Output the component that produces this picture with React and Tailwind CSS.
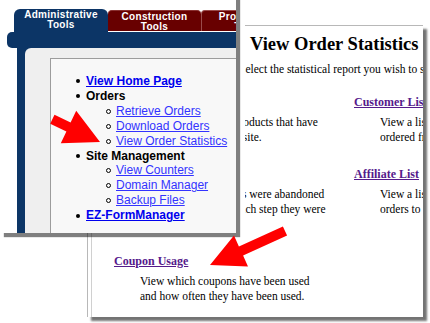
const MENU = [
  { text: 'View Home Page', level: 1, link: true },
  { text: 'Orders', level: 1 },
  { text: 'Retrieve Orders', level: 2, link: true },
  { text: 'Download Orders', level: 2, link: true },
  { text: 'View Order Statistics', level: 2, link: true },
  { text: 'Site Management', level: 1 },
  { text: 'View Counters', level: 2, link: true },
  { text: 'Domain Manager', level: 2, link: true },
  { text: 'Backup Files', level: 2, link: true },
  { text: 'EZ-FormManager', level: 1, link: true },
];

const REPORTS = [
  {
    title: 'Popular Products',
    lines: ['Display the popular products that have', 'been bought from our site.'],
  },
  {
    title: 'Customer List',
    lines: ['View a list of customers who have', 'ordered from your site.'],
  },
  {
    title: 'Abandoned Carts',
    lines: ['Shows you which carts were abandoned', 'and also exactly at which step they were', 'abandoned.'],
  },
  {
    title: 'Affiliate List',
    lines: ['View a list of affiliates and the', 'orders to them.'],
  },
  {
    title: 'Coupon Usage',
    lines: ['View which coupons have been used', 'and how often they have been used.'],
  },
];

function StatsWindow() {
  return (
    <div className="absolute left-[87px] top-[25px] w-[336px] h-[292px] bg-white border-t border-l border-[#b8b8b8] shadow-[4px_4px_2px_rgba(0,0,0,0.55)] overflow-hidden">
      <div className="h-full ml-[3px] border-l border-[#d0d0d0] text-black" style={{ fontFamily: '"Liberation Serif", "Times New Roman", serif' }}>
        <h1 className="pl-[158px] pt-[7px] text-[18.5px] leading-[22px] font-bold whitespace-nowrap">View Order Statistics</h1>
        <p className="pl-[147px] mt-[7px] text-[11.5px] leading-[15px] whitespace-nowrap">
          Select the statistical report you wish to see.
        </p>
        <div className="grid grid-cols-[240px_240px] gap-y-[22px] pl-[22px] mt-[18px]">
          {REPORTS.map((r) => (
            <div key={r.title}>
              <a className="block text-[12px] leading-[15px] font-bold text-[#551a8b] underline whitespace-nowrap">{r.title}</a>
              <div className="mt-[5px] pl-[26px] text-[11.5px] leading-[15px] whitespace-nowrap">
                {r.lines.map((l) => (
                  <div key={l}>{l}</div>
                ))}
              </div>
            </div>
          ))}
        </div>
      </div>
    </div>
  );
}

function AdminWindow() {
  return (
    <div
      className="absolute left-0 top-[-4px] w-[236px] h-[237px] bg-white shadow-[4px_4px_1px_rgba(0,0,0,0.5),9px_0_0_#ffffff] overflow-hidden flex flex-col"
      style={{ fontFamily: '"Liberation Sans", Arial, sans-serif' }}
    >
      {/* tabs */}
      <div className="flex items-start pl-[14px] pt-[13px] text-white text-[10px] leading-[10px] font-bold tracking-[0.3px] text-center">
        <div className="w-[94px] h-[23px] shrink-0 pt-[1px] bg-[#0c3566] rounded-t-[6px]">
          Administrative<br />Tools
        </div>
        <div className="w-[93px] h-[21px] shrink-0 mt-[1px] pt-[1px] bg-[#680000] rounded-t-[4px] border-t border-[#8a3030]">
          Construction<br />Tools
        </div>
        <div className="w-[93px] h-[21px] shrink-0 mt-[1px] pt-[1px] bg-[#680000] rounded-t-[4px] border-t border-l border-[#9a4a4a] whitespace-nowrap">
          Promotions<br />Tools
        </div>
      </div>

      {/* navy frame */}
      <div className="flex flex-1">
        <div className="w-[17px] shrink-0 pl-[7px]">
          <div className="h-[16px] bg-[#0c3566] rounded-l-[5px]" />
        </div>
        <div className="flex-1 bg-[#0c3566] pt-[16px] pl-[8px] flex">
          <div className="flex-1 bg-[#efefef] rounded-tl-[6px] pt-[10px] pl-[25px]">
            <div className="h-full bg-[#f8f8f8] border border-[#9c9c9c] border-r-0 border-b-0 pt-[15px] text-[12px] leading-[14.9px]">
              {MENU.map((m) => (
                <div
                  key={m.text}
                  className={m.level === 1 ? 'flex items-center pl-[25px]' : 'flex items-center pl-[55px]'}
                >
                  {m.level === 1 ? (
                    <span className="w-[4px] h-[4px] bg-black rounded-full mr-[6px] shrink-0" />
                  ) : (
                    <span className="w-[5px] h-[5px] border border-black rounded-full mr-[5px] shrink-0" />
                  )}
                  {m.link ? (
                    <a className={m.level === 1 ? 'font-bold text-[#0000ee] underline whitespace-nowrap' : 'text-[#3333ff] underline whitespace-nowrap'}>
                      {m.text}
                    </a>
                  ) : (
                    <span className="font-bold text-black whitespace-nowrap">{m.text}</span>
                  )}
                </div>
              ))}
            </div>
          </div>
        </div>
      </div>
    </div>
  );
}

function Arrows() {
  return (
    <svg className="absolute left-0 top-0 pointer-events-none" width="430" height="323" viewBox="0 0 430 323">
      <polygon
        fill="#ff0000"
        points="54.5,114.8 70.6,122.5 76.2,110.8 100,142 60.8,143.2 66.4,131.5 50.2,123.8"
      />
      <polygon
        fill="#ff0000"
        points="282.9,226.4 238.9,246.4 234,235.5 210,265 248,266.5 243.1,255.6 287.1,235.6"
      />
    </svg>
  );
}

export default function App() {
  return (
    <div className="relative w-[430px] h-[323px] overflow-hidden bg-white">
      <StatsWindow />
      <AdminWindow />
      <Arrows />
    </div>
  );
}
